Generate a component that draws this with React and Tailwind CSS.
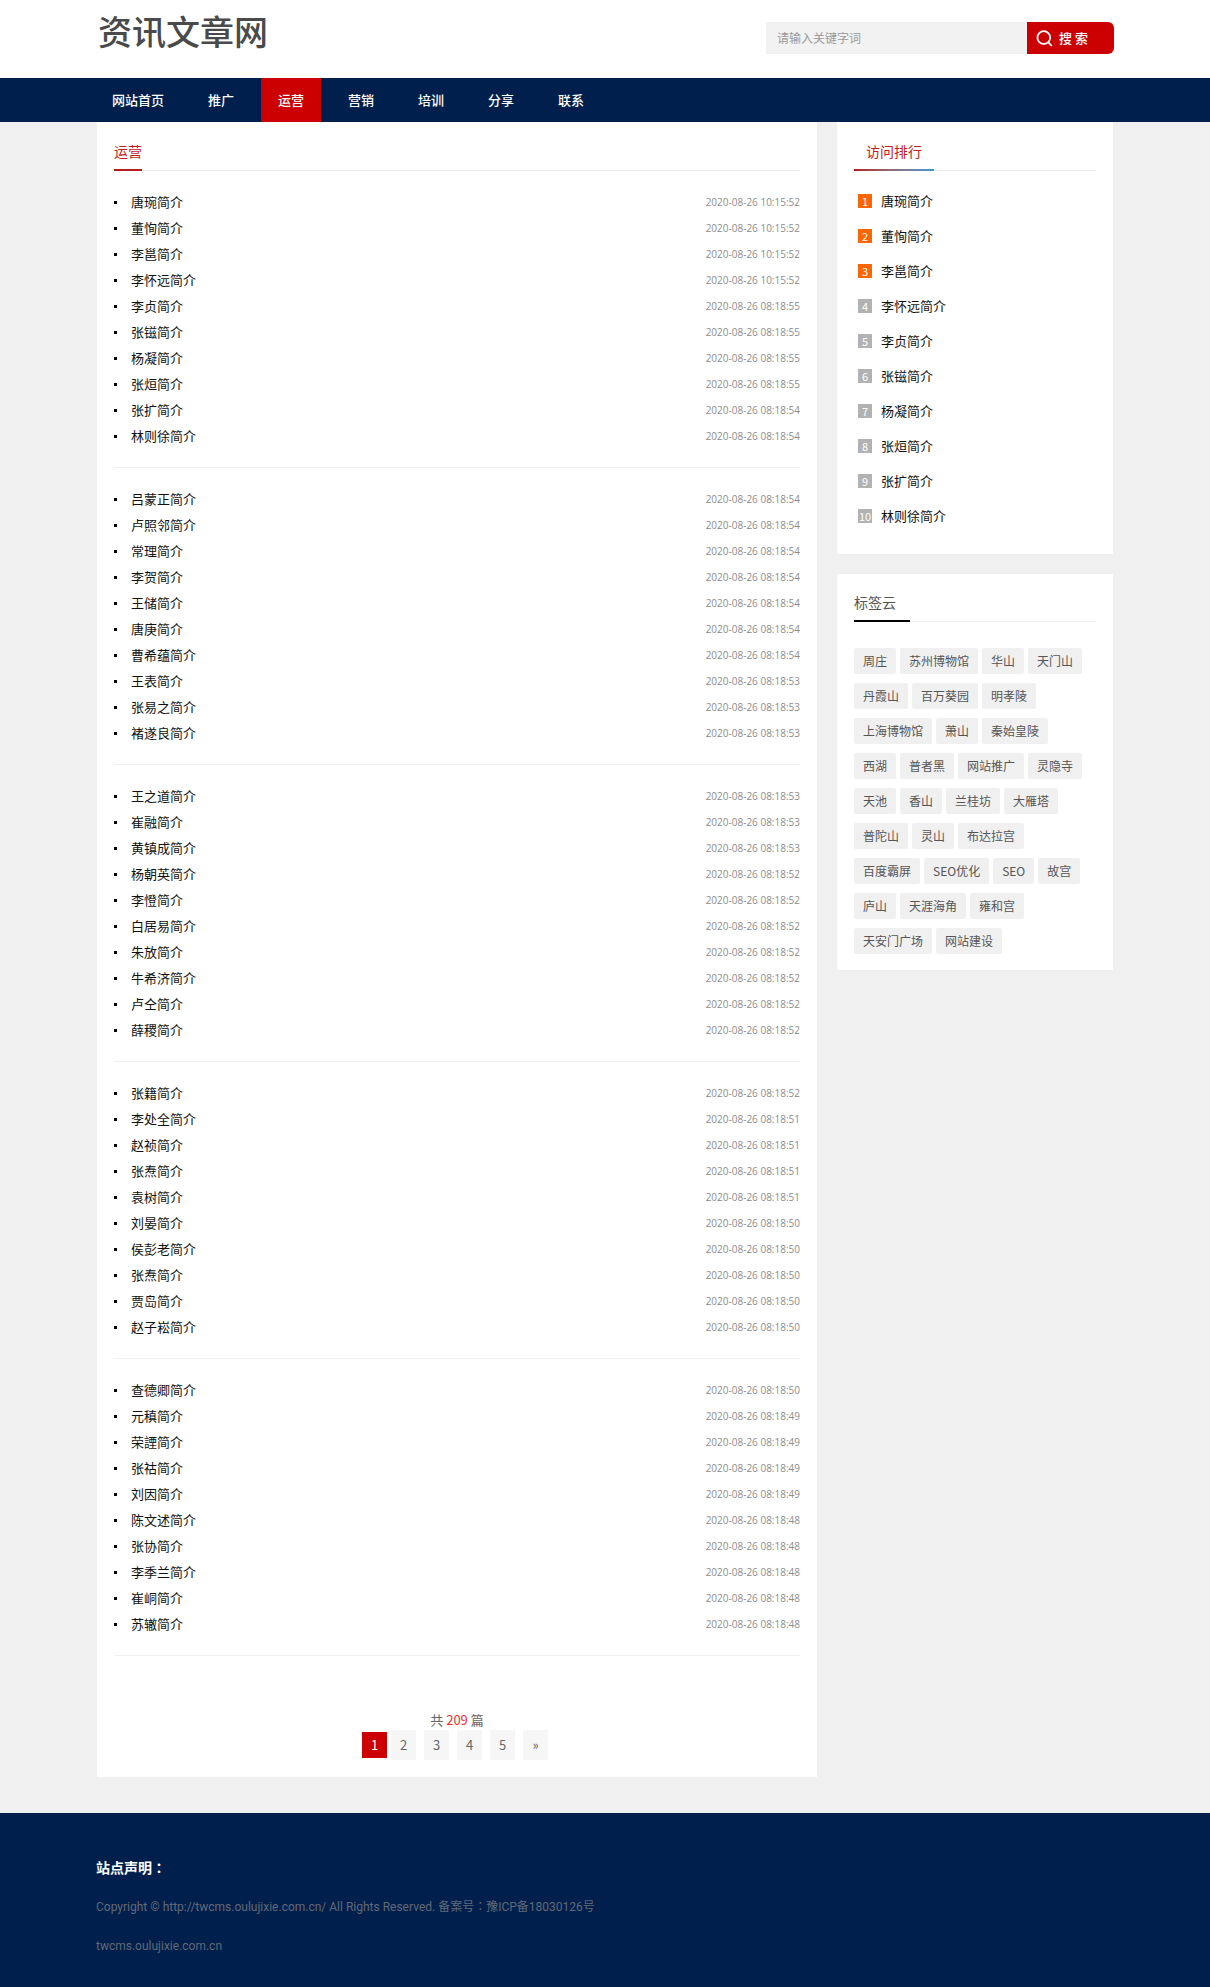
import React, { useState } from 'react'

const navItems = ['网站首页', '推广', '运营', '营销', '培训', '分享', '联系'];

const groups = [
  [
    ['唐琬', '10:15:52'],
    ['董恂', '10:15:52'],
    ['李邕', '10:15:52'],
    ['李怀远', '10:15:52'],
    ['李贞', '08:18:55'],
    ['张镃', '08:18:55'],
    ['杨凝', '08:18:55'],
    ['张烜', '08:18:55'],
    ['张扩', '08:18:54'],
    ['林则徐', '08:18:54'],
  ],
  [
    ['吕蒙正', '08:18:54'],
    ['卢照邻', '08:18:54'],
    ['常理', '08:18:54'],
    ['李贺', '08:18:54'],
    ['王储', '08:18:54'],
    ['唐庚', '08:18:54'],
    ['曹希蕴', '08:18:54'],
    ['王表', '08:18:53'],
    ['张易之', '08:18:53'],
    ['褚遂良', '08:18:53'],
  ],
  [
    ['王之道', '08:18:53'],
    ['崔融', '08:18:53'],
    ['黄镇成', '08:18:53'],
    ['杨朝英', '08:18:52'],
    ['李憕', '08:18:52'],
    ['白居易', '08:18:52'],
    ['朱放', '08:18:52'],
    ['牛希济', '08:18:52'],
    ['卢仝', '08:18:52'],
    ['薛稷', '08:18:52'],
  ],
  [
    ['张籍', '08:18:52'],
    ['李处全', '08:18:51'],
    ['赵祯', '08:18:51'],
    ['张焘', '08:18:51'],
    ['袁树', '08:18:51'],
    ['刘晏', '08:18:50'],
    ['侯彭老', '08:18:50'],
    ['张焘', '08:18:50'],
    ['贾岛', '08:18:50'],
    ['赵子崧', '08:18:50'],
  ],
  [
    ['查德卿', '08:18:50'],
    ['元稹', '08:18:49'],
    ['荣諲', '08:18:49'],
    ['张祜', '08:18:49'],
    ['刘因', '08:18:49'],
    ['陈文述', '08:18:48'],
    ['张协', '08:18:48'],
    ['李季兰', '08:18:48'],
    ['崔峒', '08:18:48'],
    ['苏辙', '08:18:48'],
  ],
];

const tags = [
  '周庄', '苏州博物馆', '华山', '天门山', '丹霞山', '百万葵园', '明孝陵',
  '上海博物馆', '萧山', '秦始皇陵', '西湖', '普者黑', '网站推广', '灵隐寺',
  '天池', '香山', '兰桂坊', '大雁塔', '普陀山', '灵山', '布达拉宫',
  '百度霸屏', 'SEO优化', 'SEO', '故宫', '庐山', '天涯海角', '雍和宫',
  '天安门广场', '网站建设',
];

function Header() {
  const [keyword, setKeyword] = useState('');

  return (
    <header className="bg-white">
      <div className="mx-auto flex h-[78px] w-full max-w-[1018px] items-start justify-between">
        <a href="#" className="ml-[2px] mt-[6px] text-[34px] font-medium leading-[50px] text-[#4a4a4a]">资讯文章网</a>
        <form onSubmit={(e) => e.preventDefault()} className="mt-[22px] flex h-8">
          <input
            type="text"
            aria-label="请输入关键字词"
            value={keyword}
            onChange={(e) => setKeyword(e.target.value)}
            placeholder="请输入关键字词"
            className="w-[261px] bg-[#f2f2f2] px-[11px] text-xs text-gray-700 outline-none placeholder:text-[#999]"
          />
          <button
            type="submit"
            className="flex w-[87px] items-center gap-[6px] rounded-r-md bg-[#cc0000] pl-[9px] text-[13px] font-medium text-white"
          >
            <svg viewBox="0 0 17 17" className="size-[17px]" fill="none" stroke="currentColor" strokeWidth="1.8">
              <circle cx="7.8" cy="7.6" r="6.4" />
              <path d="M12.2 12.2l3.6 3.8" />
            </svg>
            搜 索
          </button>
        </form>
      </div>
      <nav className="bg-[#001f4d]">
        <ul className="mx-auto flex w-full max-w-[1020px] gap-[10px]">
          {navItems.map((item) => (
            <li key={item}>
              <a
                href="#"
                className={`block px-[17px] text-[13px] font-medium leading-[44px] text-white ${item === '运营' ? "bg-[#cc0000]" : ""}`}
              >
                {item}
              </a>
            </li>
          ))}
        </ul>
      </nav>
    </header>
  );
}

function ArticleList() {
  return (
    <section className="min-w-0 flex-1 bg-white px-[17px] pb-[17px]">
      <div className="flex border-b border-[#ececec] pt-3">
        <h2 className="-mb-px border-b-2 border-[#b81c1c] text-sm leading-[35px] text-[#c61a1a]">运营</h2>
      </div>
      <div className="mt-[18px]">
        {groups.map((rows, i) => (
          <ul key={i} className="mb-[18px] border-b border-[#f0f0f0] pb-[18px]">
            {rows.map(([name, time], j) => (
              <li key={j} className="flex items-center justify-between leading-[26px]">
                <a
                  href="#"
                  className="flex items-center gap-[14px] text-[13px] text-[#111] before:size-[3px] before:bg-black"
                >
                  {name}简介
                </a>
                <span className="font-['Open_Sans',sans-serif] text-[10px] text-[#8c8c8c]">2020-08-26 {time}</span>
              </li>
            ))}
          </ul>
        ))}
      </div>
      <Pager />
    </section>
  );
}

function Pager() {
  return (
    <div className="pt-9 text-center text-[13px] text-[#666]">
      <p className="leading-5">共 <span className="text-[#f03030]">209</span> 篇</p>
      <div className="flex items-center justify-center gap-2 pr-1">
        <span className="-mr-1 w-[25px] bg-[#cc0000] leading-[26px] text-white">1</span>
        {['2', '3', '4', '5', '»'].map((page) => (
          <a key={page} href="#" className="w-[25px] bg-[#f6f6f6] leading-[30px]">{page}</a>
        ))}
      </div>
    </div>
  );
}

function Ranking() {
  const names = groups[0].map(([name]) => name);

  return (
    <section className="bg-white px-[17px] pb-[21px]">
      <div className="flex border-b border-[#ececec] pt-3">
        <div className="-mb-px">
          <h2 className="px-3 text-sm leading-[35px] text-[#c61a1a]">访问排行</h2>
          <div className="h-[2px] bg-gradient-to-r from-[#b01818] to-[#2a9ad6]"></div>
        </div>
      </div>
      <ol className="mt-3 px-1">
        {names.map((name, i) => (
          <li key={name} className="flex h-[35px] items-center gap-[9px]">
            <span className={`size-[14px] text-center text-[11px] leading-[14px] text-white ${i < 3 ? "bg-[#ff6600]" : "bg-[#b2b2b2]"}`}>
              {i + 1}
            </span>
            <a href="#" className="text-[13px] text-[#111]">{name}简介</a>
          </li>
        ))}
      </ol>
    </section>
  );
}

function TagCloud() {
  return (
    <section className="bg-white px-[17px] pb-4">
      <div className="flex border-b border-[#f0f0f0] pt-[11px]">
        <h2 className="-mb-px w-14 border-b-2 border-black text-sm leading-[35px] text-[#555]">标签云</h2>
      </div>
      <div className="mt-[26px] flex flex-wrap gap-x-1 gap-y-[9px] pr-1">
        {tags.map((tag) => (
          <a key={tag} href="#" className="rounded-xs bg-[#f0f0f0] px-[9px] text-xs leading-[26px] text-[#555]">
            {tag}
          </a>
        ))}
      </div>
    </section>
  );
}

function Footer() {
  return (
    <footer className="bg-[#001f4d] pb-[21px] pt-9">
      <div className="mx-auto w-full max-w-[1018px] font-[Roboto,'Noto_Sans_CJK_TC',sans-serif] text-xs leading-[39px] text-[#626a76]">
        <h3 className="text-sm font-bold leading-[39px] text-white">站点声明：</h3>
        <p className="leading-[39px]">Copyright © http://twcms.oulujixie.com.cn/ All Rights Reserved. 备案号：豫ICP备18030126号</p>
        <p className="leading-[39px]">twcms.oulujixie.com.cn</p>
      </div>
    </footer>
  );
}

function App() {
  return (
    <div className="min-h-screen bg-[#f0f0f0] font-['Noto_Sans_CJK_SC',sans-serif]">
      <Header />
      <main className="mx-auto mb-9 flex w-full max-w-[1016px] items-start gap-5">
        <ArticleList />
        <aside className="flex w-[276px] shrink-0 flex-col gap-5">
          <Ranking />
          <TagCloud />
        </aside>
      </main>
      <Footer />
    </div>
  );
}

export default App;
